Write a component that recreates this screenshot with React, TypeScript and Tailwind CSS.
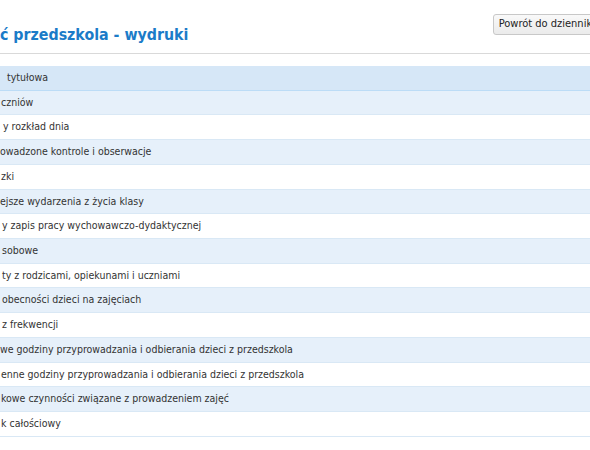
const rows = [
  { text: 'tytułowa', indent: 'pl-[7px]' },
  { text: 'czniów', indent: 'pl-[1px]' },
  { text: 'y rozkład dnia', indent: 'pl-[3px]' },
  { text: 'owadzone kontrole i obserwacje', indent: 'pl-0' },
  { text: 'zki', indent: 'pl-[1px]' },
  { text: 'ejsze wydarzenia z życia klasy', indent: 'pl-0' },
  { text: 'y zapis pracy wychowawczo-dydaktycznej', indent: 'pl-[2px]' },
  { text: 'sobowe', indent: 'pl-[2px]' },
  { text: 'ty z rodzicami, opiekunami i uczniami', indent: 'pl-[2px]' },
  { text: 'obecności dzieci na zajęciach', indent: 'pl-[2px]' },
  { text: 'z frekwencji', indent: 'pl-[2px]' },
  { text: 'we godziny przyprowadzania i odbierania dzieci z przedszkola', indent: 'pl-0' },
  { text: 'enne godziny przyprowadzania i odbierania dzieci z przedszkola', indent: 'pl-[1px]' },
  { text: 'kowe czynności związane z prowadzeniem zajęć', indent: 'pl-[1px]' },
  { text: 'k całościowy', indent: 'pl-[1px]' },
]

export default function App() {
  return (
    <div className="w-[590px] h-[450px] overflow-hidden bg-white font-['DejaVu_Sans_Condensed','DejaVu_Sans',sans-serif] text-[#333]">
      {/* header */}
      <div className="flex items-start justify-between h-[54px] border-b border-[#d9d9d9]">
        <h1 className="mt-[25px] whitespace-nowrap text-[15.8px] font-bold leading-[20px] text-[#1b7bc8]">
          ć przedszkola - wydruki
        </h1>
        <button className="mt-[14px] -mr-[9px] h-[21px] pl-[5px] shrink-0 whitespace-nowrap rounded-[3px] border border-[#c8c8c8] bg-gradient-to-b from-[#f9f9f9] to-[#ebebeb] text-[11px] text-[#222]">
          Powrót do dziennika
        </button>
      </div>

      {/* list of printouts */}
      <div className="mt-[12px] text-[10.5px]">
        {rows.map((r, i) => (
          <div
            key={r.text}
            className={
              'h-[24.73px] flex items-center whitespace-nowrap border-b ' +
              (i === 0
                ? 'bg-[#d6e7f7] border-[#bcdcf6]'
                : i % 2 === 1
                  ? 'bg-[#e6f0fa] border-[#d9e8f5]'
                  : 'bg-white border-[#d9e8f5]')
            }
          >
            <span className={r.indent}>{r.text}</span>
          </div>
        ))}
      </div>
    </div>
  )
}
